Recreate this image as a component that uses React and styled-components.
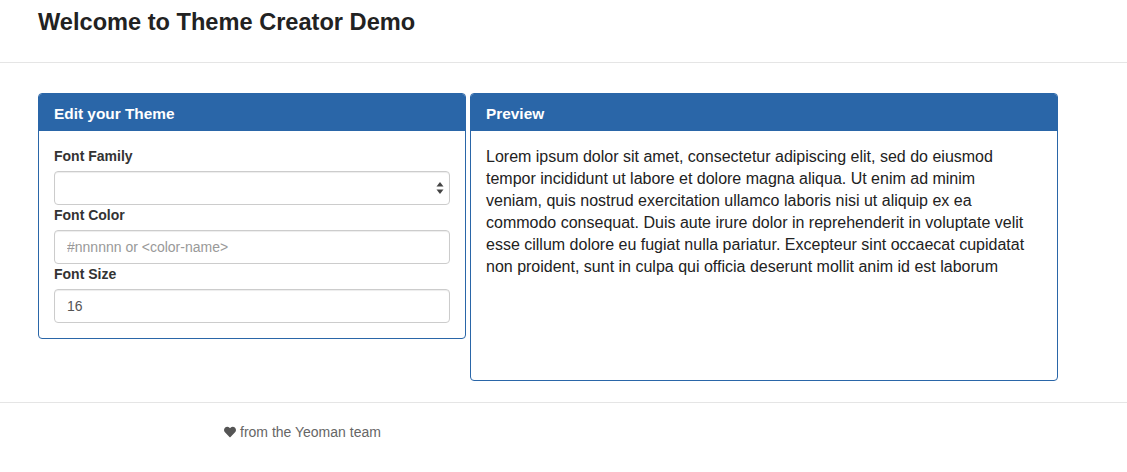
import React from 'react';
import styled, { createGlobalStyle } from 'styled-components';
import { FaHeart } from 'react-icons/fa';

const GlobalStyle = createGlobalStyle`
  html, body {
    margin: 0;
    padding: 0;
    background: #ffffff;
  }
  body {
    font-family: "Liberation Sans", Arial, sans-serif;
    font-size: 14px;
    line-height: 1.42857;
    color: #333333;
  }
  * {
    box-sizing: border-box;
  }
`;

const Header = styled.header`
  height: 63px;
  border-bottom: 1px solid #e5e5e5;
  padding: 9px 38px 0;
`;

const Title = styled.h3`
  margin: 0;
  font-size: 23.6px;
  line-height: 26px;
  font-weight: 700;
  color: #222222;
`;

const Main = styled.main`
  display: flex;
  align-items: flex-start;
  gap: 4px;
  padding: 30px 38px 21px;
`;

const Panel = styled.section`
  width: ${(p) => p.$width}px;
  border: 1px solid #2a66a8;
  border-radius: 4px;
  background: #ffffff;
  overflow: hidden;
`;

const PanelHeading = styled.div`
  height: 37px;
  padding: 11px 15px 8px;
  background: #2a66a8;
  color: #ffffff;
  font-size: 15.4px;
  font-weight: 700;
  line-height: 18px;
`;

const PanelBody = styled.div`
  padding: 15px;
  min-height: ${(p) => p.$minHeight || 0}px;
`;

const Label = styled.label`
  display: block;
  margin-bottom: 5px;
  font-weight: 700;
  font-size: 14px;
  line-height: 20px;
  color: #333333;
`;

const SelectWrap = styled.div`
  position: relative;
`;

const Select = styled.select`
  display: block;
  width: 100%;
  height: 34px;
  padding: 6px 12px;
  border: 1px solid #cccccc;
  border-radius: 4px;
  background: #ffffff;
  font-family: inherit;
  font-size: 14px;
  color: #555555;
  appearance: none;
  -webkit-appearance: none;
  box-shadow: inset 0 1px 1px rgba(0, 0, 0, 0.075);
`;

const Arrows = styled.svg`
  position: absolute;
  right: 6px;
  top: 11px;
  pointer-events: none;
`;

const Input = styled.input`
  display: block;
  width: 100%;
  height: 34px;
  padding: 6px 12px;
  border: 1px solid #cccccc;
  border-radius: 4px;
  background: #ffffff;
  font-family: inherit;
  font-size: 14px;
  color: #555555;
  box-shadow: inset 0 1px 1px rgba(0, 0, 0, 0.075);
  &::placeholder {
    color: #999999;
  }
`;

const Preview = styled.p`
  margin: 0;
  max-width: 542px;
  font-size: 16px;
  line-height: 22px;
  color: #222222;
`;

const Footer = styled.footer`
  border-top: 1px solid #e5e5e5;
  padding: 19px 0 0 224px;
  color: #666666;
  font-size: 14px;
  line-height: 20px;
  display: flex;
  align-items: center;
  gap: 4px;
`;

export default function App() {
  return (
    <>
      <GlobalStyle />
      <Header>
        <Title>Welcome to Theme Creator Demo</Title>
      </Header>
      <Main>
        <Panel $width={428}>
          <PanelHeading>Edit your Theme</PanelHeading>
          <PanelBody>
            <Label>Font Family</Label>
            <SelectWrap>
              <Select defaultValue="">
                <option value=""></option>
              </Select>
              <Arrows width="8" height="12" viewBox="0 0 8 12">
                <path d="M4 0 L7.5 4.5 H0.5 Z" fill="#444" />
                <path d="M4 12 L7.5 7.5 H0.5 Z" fill="#444" />
              </Arrows>
            </SelectWrap>
            <Label>Font Color</Label>
            <Input placeholder="#nnnnnn or <color-name>" />
            <Label>Font Size</Label>
            <Input defaultValue="16" />
          </PanelBody>
        </Panel>
        <Panel $width={588}>
          <PanelHeading>Preview</PanelHeading>
          <PanelBody $minHeight={249}>
            <Preview>
              Lorem ipsum dolor sit amet, consectetur adipiscing elit, sed do eiusmod tempor incididunt ut labore et dolore magna aliqua. Ut enim ad minim veniam, quis nostrud exercitation ullamco laboris nisi ut aliquip ex ea commodo consequat. Duis aute irure dolor in reprehenderit in voluptate velit esse cillum dolore eu fugiat nulla pariatur. Excepteur sint occaecat cupidatat non proident, sunt in culpa qui officia deserunt mollit anim id est laborum
            </Preview>
          </PanelBody>
        </Panel>
      </Main>
      <Footer>
        <FaHeart size={12} color="#555" />
        <span>from the Yeoman team</span>
      </Footer>
    </>
  );
}
